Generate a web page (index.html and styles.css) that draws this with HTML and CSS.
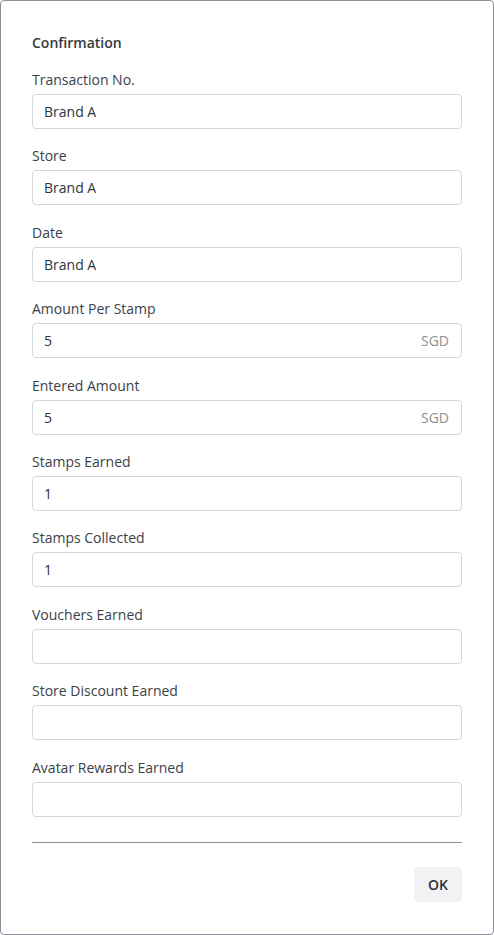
FILE: index.html
```html
<!DOCTYPE html>
<html lang="en">
<head>
  <meta charset="UTF-8" />
  <meta name="viewport" content="width=device-width, initial-scale=1.0"/>
  <title>Confirmation</title>
  <link rel="stylesheet" href="styles.css">
</head>
<body>
  <div class="confirm-dialog">
    <h3 class="confirm-title">Confirmation</h3>

    <div class="confirm-fields">
      <div class="field">
        <label>Transaction No.</label>
        <div class="field-box"><span class="field-value">Brand A</span></div>
      </div>
      <div class="field">
        <label>Store</label>
        <div class="field-box"><span class="field-value">Brand A</span></div>
      </div>
      <div class="field">
        <label>Date</label>
        <div class="field-box"><span class="field-value">Brand A</span></div>
      </div>
      <div class="field">
        <label>Amount Per Stamp</label>
        <div class="field-box"><span class="field-value">5</span><span class="field-unit">SGD</span></div>
      </div>
      <div class="field">
        <label>Entered Amount</label>
        <div class="field-box"><span class="field-value">5</span><span class="field-unit">SGD</span></div>
      </div>
      <div class="field">
        <label>Stamps Earned</label>
        <div class="field-box"><span class="field-value">1</span></div>
      </div>
      <div class="field">
        <label>Stamps Collected</label>
        <div class="field-box"><span class="field-value">1</span></div>
      </div>
      <div class="field">
        <label>Vouchers Earned</label>
        <div class="field-box"></div>
      </div>
      <div class="field">
        <label>Store Discount Earned</label>
        <div class="field-box"></div>
      </div>
      <div class="field">
        <label>Avatar Rewards Earned</label>
        <div class="field-box"></div>
      </div>
    </div>

    <hr class="confirm-divider">

    <div class="confirm-actions">
      <button type="button" class="confirm-button">OK</button>
    </div>
  </div>
</body>
</html>
```

FILE: styles.css
```css
body {
  margin: 0;
  font-family: "Open Sans", "Noto Sans", Arial, sans-serif;
  background: #ffffff;
}

.confirm-dialog {
  box-sizing: border-box;
  width: 494px;
  height: 935px;
  border: 1px solid #8a9097;
  border-radius: 4px;
  padding: 32px 31px;
  background: #ffffff;
}

.confirm-title {
  font-size: 14px;
  font-weight: 600;
  line-height: 20px;
  color: #333a42;
  margin: 0 0 17px 0;
}

.confirm-fields {
  display: flex;
  flex-direction: column;
  gap: 17.4px;
}

.field {
  display: flex;
  flex-direction: column;
  gap: 4px;
}

.field label {
  font-size: 14px;
  line-height: 20px;
  color: #3b4148;
}

.field-box {
  box-sizing: border-box;
  height: 35px;
  border: 1px solid #d3d7dc;
  border-radius: 4px;
  padding: 0 12px 0 11px;
  display: flex;
  align-items: center;
  justify-content: space-between;
  font-size: 14px;
  color: #2f353b;
}

.field-unit {
  color: #8c9197;
  font-size: 14px;
}

.confirm-divider {
  border: none;
  border-top: 1px solid #8a9097;
  margin: 25px 0 24px 0;
}

.confirm-actions {
  display: flex;
  justify-content: flex-end;
}

.confirm-button {
  font-family: inherit;
  width: 48px;
  height: 35px;
  border: none;
  border-radius: 4px;
  background: #f1f2f4;
  color: #2a2f35;
  font-size: 14px;
  font-weight: 600;
  cursor: pointer;
}
```
